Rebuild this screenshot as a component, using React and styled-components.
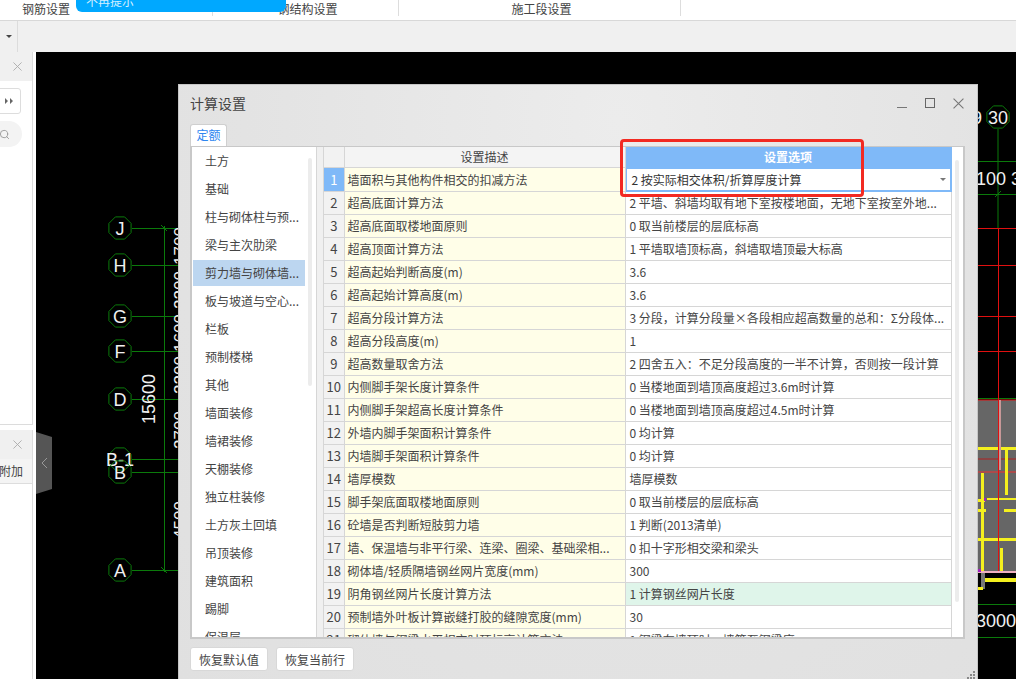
import React from 'react';
import styled, { createGlobalStyle } from 'styled-components';
import { Search } from 'lucide-react';

const GlobalStyle = createGlobalStyle`
  html, body {
    margin: 0;
    height: 100%;
    overflow: hidden;
    background: #fff;
  }
  body {
    font-family: "Noto Sans CJK SC", "Noto Sans", sans-serif;
    font-size: 12px;
    color: #3a3a3a;
  }
`;

const categories = [
  '土方', '基础', '柱与砌体柱与预...', '梁与主次肋梁', '剪力墙与砌体墙...', '板与坡道与空心...',
  '栏板', '预制楼梯', '其他', '墙面装修', '墙裙装修', '天棚装修', '独立柱装修', '土方灰土回填',
  '吊顶装修', '建筑面积', '踢脚', '保温层',
];

const rows = [
  ['墙面积与其他构件相交的扣减方法', '2 按实际相交体积/折算厚度计算'],
  ['超高底面计算方法', '2 平墙、斜墙均取有地下室按楼地面，无地下室按室外地...'],
  ['超高底面取楼地面原则', '0 取当前楼层的层底标高'],
  ['超高顶面计算方法', '1 平墙取墙顶标高，斜墙取墙顶最大标高'],
  ['超高起始判断高度(m)', '3.6'],
  ['超高起始计算高度(m)', '3.6'],
  ['超高分段计算方法', '3 分段，计算分段量×各段相应超高数量的总和：Σ分段体...'],
  ['超高分段高度(m)', '1'],
  ['超高数量取舍方法', '2 四舍五入：不足分段高度的一半不计算，否则按一段计算'],
  ['内侧脚手架长度计算条件', '0 当楼地面到墙顶高度超过3.6m时计算'],
  ['内侧脚手架超高长度计算条件', '0 当楼地面到墙顶高度超过4.5m时计算'],
  ['外墙内脚手架面积计算条件', '0 均计算'],
  ['内墙脚手架面积计算条件', '0 均计算'],
  ['墙厚模数', '墙厚模数'],
  ['脚手架底面取楼地面原则', '0 取当前楼层的层底标高'],
  ['砼墙是否判断短肢剪力墙', '1 判断(2013清单)'],
  ['墙、保温墙与非平行梁、连梁、圈梁、基础梁相...', '0 扣十字形相交梁和梁头'],
  ['砌体墙/轻质隔墙钢丝网片宽度(mm)', '300'],
  ['阴角钢丝网片长度计算方法', '1 计算钢丝网片长度'],
  ['预制墙外叶板计算嵌缝打胶的缝隙宽度(mm)', '30'],
  ['砌体墙与钢梁水平相交时顶标高计算方法', '1 钢梁在墙顶时，墙算至钢梁底'],
];

const axes = [
  ['J', 228], ['H', 265], ['G', 316], ['F', 351], ['D', 399], ['B-1', 459], ['B', 472], ['A', 570],
];

const spans = [['1700', 246], ['2200', 290], ['1600', 333], ['2200', 375], ['2700', 430], ['4500', 520]];

function hexPoints(cx, cy, r) {
  const pts = [];
  for (let i = 0; i < 8; i++) {
    const a = Math.PI / 8 + (i * Math.PI) / 4;
    pts.push(`${(cx + r * Math.cos(a)).toFixed(1)},${(cy + r * Math.sin(a)).toFixed(1)}`);
  }
  return pts.join(' ');
}

function CadDrawing() {
  const green = '#0b7a0b';
  const yellow = '#f4f01e';
  const red = '#e01010';
  return (
    <CadSvg viewBox="36 52 980 627">
      <line x1="164.500" y1="226" x2="164.500" y2="572" stroke={green} />
      {axes.map(([name, y]) => (
        <g key={name}>
          <polygon points={hexPoints(120, y, 12)} fill="none" stroke={green} />
          <line x1="132" y1={y + 0.5} x2="180" y2={y + 0.5} stroke={green} />
          <CadLabel x="120" y={y + 6.5} fontSize="18" textAnchor="middle">{name}</CadLabel>
        </g>
      ))}
      <path d="M161 225l6 6M161 567l6 6" stroke={green} />
      <CadLabel transform="translate(155 399) rotate(-90)" fontSize="18" textAnchor="middle">15600</CadLabel>
      {spans.map(([label, y]) => (
        <CadLabel key={y} transform={`translate(186 ${y}) rotate(-90)`} fontSize="17" textAnchor="middle">{label}</CadLabel>
      ))}

      <polygon points={hexPoints(966, 117, 12)} fill="none" stroke={green} />
      <polygon points={hexPoints(998, 117, 12)} fill="none" stroke={green} />
      <CadLabel x="977" y="124" fontSize="18" textAnchor="middle">9</CadLabel>
      <CadLabel x="998" y="124" fontSize="18" textAnchor="middle">30</CadLabel>
      <line x1="998" y1="129" x2="998" y2="228" stroke={green} />
      <line x1="978" y1="161.500" x2="1016" y2="161.500" stroke={green} />
      <line x1="978" y1="194.500" x2="1016" y2="194.500" stroke={green} />
      <path d="M995 197l6-6" stroke={green} />
      <CadLabel x="976" y="185" fontSize="18">100 3</CadLabel>

      {[228, 265, 316, 351].map(y => (
        <line key={y} x1="978" y1={y + 0.5} x2="1016" y2={y + 0.5} stroke={red} />
      ))}
      <rect x="978" y="400" width="38" height="172" fill="#666" />
      <line x1="978" y1="398.500" x2="1016" y2="398.500" stroke={green} />
      <line x1="978" y1="400" x2="1016" y2="400" stroke={red} />
      <rect x="978" y="447" width="38" height="3" fill={yellow} />
      <line x1="978" y1="459" x2="1016" y2="459" stroke="#b02020" />
      <line x1="978" y1="472" x2="1016" y2="472" stroke="#f03030" />
      <rect x="981" y="473" width="3" height="98" fill={yellow} />
      <rect x="1005" y="450" width="3" height="45" fill={yellow} />
      <rect x="978" y="499" width="7" height="3" fill={yellow} />
      <rect x="987" y="498" width="29" height="2" fill={yellow} />
      <rect x="978" y="509" width="8" height="3" fill={yellow} />
      <rect x="1004" y="509" width="12" height="3" fill={yellow} />
      <rect x="978" y="538" width="38" height="3" fill={yellow} />
      <rect x="1000" y="548" width="3" height="23" fill={yellow} />
      <rect x="998" y="400" width="3" height="70" fill="#c89898" />
      <line x1="998.500" y1="228" x2="998.500" y2="572" stroke={red} />
      <rect x="978" y="571" width="38" height="2" fill="#f0b0c0" />
      <rect x="985" y="578" width="31" height="4" fill={yellow} />
      <rect x="981" y="573" width="4" height="16" fill="#777" />
      <rect x="978" y="587" width="5" height="3" fill={yellow} />
      <rect x="984" y="498" width="2" height="3" fill="#a020c0" />
      <rect x="978" y="569" width="3" height="3" fill="#a020c0" />
      <line x1="978" y1="604.500" x2="1016" y2="604.500" stroke={green} />
      <line x1="978" y1="637.500" x2="1016" y2="637.500" stroke={green} />
      <CadLabel x="976" y="627" fontSize="18">3000</CadLabel>
    </CadSvg>
  );
}

function CloseIcon({ size = 9, color = '#aaa' }) {
  return (
    <svg width={size} height={size} viewBox="0 0 10 10">
      <path d="M0.500 0.500l9 9M9.500 0.500l-9 9" stroke={color} fill="none" />
    </svg>
  );
}

function WindowButtons() {
  return (
    <WindowControls>
      <svg width="10" height="10" viewBox="0 0 10 10"><path d="M0 9.500h10" stroke="#777" fill="none" /></svg>
      <svg width="10" height="10" viewBox="0 0 10 10"><rect x="0.500" y="0.500" width="9" height="9" stroke="#666" fill="none" /></svg>
      <CloseIcon size={11} color="#777" />
    </WindowControls>
  );
}

function SettingsDialog() {
  return (
    <Dialog>
      <TitleBar>
        <DialogTitle>计算设置</DialogTitle>
        <WindowButtons />
      </TitleBar>
      <TabStrip><ActiveTab>定额</ActiveTab></TabStrip>
      <Panel>
        <CategoryList>
          {categories.map((c, i) => (
            <CategoryItem key={c} $selected={i === 4}>{c}</CategoryItem>
          ))}
          <ListThumb />
        </CategoryList>
        <Gutter />
        <TableArea>
          <SettingsTable>
            <colgroup>
              <col style={{ width: 20 }} />
              <col style={{ width: 281 }} />
              <col style={{ width: 326 }} />
            </colgroup>
            <thead>
              <tr>
                <NumHead />
                <DescHead>设置描述</DescHead>
                <ValueHead>设置选项</ValueHead>
              </tr>
            </thead>
            <tbody>
              {rows.map(([desc, value], i) => (
                <tr key={desc}>
                  <NumCell $active={i === 0}>{i + 1}</NumCell>
                  <DescCell>{desc}</DescCell>
                  {i === 0 ? (
                    <EditCell>
                      <EditBox>
                        {value}
                        <Caret />
                      </EditBox>
                    </EditCell>
                  ) : (
                    <ValueCell $changed={i === 18}>{value}</ValueCell>
                  )}
                </tr>
              ))}
            </tbody>
          </SettingsTable>
          <TableThumb />
        </TableArea>
      </Panel>
      <Footer>
        <FooterButton>恢复默认值</FooterButton>
        <FooterButton>恢复当前行</FooterButton>
      </Footer>
      <Highlight />
      <ResizeGrip viewBox="0 0 8 8">
        <path d="M6 0h2v2H6zM3 3h2v2H3zM6 3h2v2H6zM0 6h2v2H0zM3 6h2v2H3zM6 6h2v2H6z" fill="#888" />
      </ResizeGrip>
    </Dialog>
  );
}

export default function App() {
  return (
    <>
      <GlobalStyle />
      <Page>
        <TopTabs>
          <TopTab $width={213} $first>钢筋设置</TopTab>
          <TopTab $width={186}>钢结构设置</TopTab>
          <TopTab $width={282}>施工段设置</TopTab>
          <Toast>不再提示</Toast>
        </TopTabs>
        <Toolbar>
          <ToolbarMenu><DownCaret /></ToolbarMenu>
        </Toolbar>
        <Main>
          <LeftRail>
            <SidePanel $grow>
              <SideHeader><CloseIcon /></SideHeader>
              <StepButton>
                <svg width="8" height="6" viewBox="0 0 8 6"><path d="M0 0l3 3-3 3zM5 0l3 3-3 3z" fill="#666" /></svg>
              </StepButton>
              <SearchPill><Search size={11} color="#999" /></SearchPill>
            </SidePanel>
            <SidePanel $height={249}>
              <SideHeader><CloseIcon /></SideHeader>
              <AttachTab>附加</AttachTab>
            </SidePanel>
          </LeftRail>
          <Canvas>
            <CadDrawing />
            <CollapseHandle>
              <svg width="7" height="12" viewBox="0 0 7 12"><path d="M6 1L1 6l5 5" stroke="#999" fill="none" /></svg>
            </CollapseHandle>
            <SettingsDialog />
          </Canvas>
        </Main>
      </Page>
    </>
  );
}

const Page = styled.div`
  width: 1016px;
  height: 679px;
  display: flex;
  flex-direction: column;
  overflow: hidden;
  background: #fff;
`;

const TopTabs = styled.div`
  position: relative;
  display: flex;
  height: 20px;
  flex: none;
  background: #fff;
  border-bottom: 1px solid #d8d8d8;
  overflow: hidden;
`;

const TopTab = styled.div`
  box-sizing: border-box;
  width: ${p => p.$width}px;
  height: 16px;
  line-height: 18px;
  color: #444;
  border-right: 1px solid #ddd;
  text-align: ${p => (p.$first ? 'left' : 'center')};
  padding-left: ${p => (p.$first ? 22 : 4)}px;
`;

const Toast = styled.div`
  position: absolute;
  left: 76px;
  top: 0;
  width: 210px;
  height: 12px;
  box-sizing: border-box;
  padding-left: 10px;
  line-height: 2px;
  color: #d5f0ff;
  background: #00a8ff;
  border-radius: 0 0 6px 6px;
`;

const Toolbar = styled.div`
  height: 31px;
  flex: none;
  display: flex;
  background: #f0f0f0;
`;

const ToolbarMenu = styled.div`
  width: 18px;
  display: flex;
  align-items: center;
  justify-content: center;
  box-sizing: border-box;
  border-right: 1px solid #dcdcdc;
`;

const DownCaret = styled.span`
  width: 0;
  height: 0;
  border-left: 3px solid transparent;
  border-right: 3px solid transparent;
  border-top: 3px solid #444;
`;

const Main = styled.div`
  flex: 1;
  min-height: 0;
  display: flex;
`;

const LeftRail = styled.div`
  width: 36px;
  flex: none;
  display: flex;
  flex-direction: column;
  gap: 5px;
  box-sizing: border-box;
  padding-right: 3px;
  background: #fff;
`;

const SidePanel = styled.div`
  display: flex;
  flex-direction: column;
  box-sizing: border-box;
  border-right: 1px solid #dcdcdc;
  border-bottom: ${p => (p.$grow ? '1px solid #dcdcdc' : 'none')};
  flex: ${p => (p.$grow ? '1' : 'none')};
  height: ${p => (p.$height ? `${p.$height}px` : 'auto')};
  overflow: hidden;
`;

const SideHeader = styled.div`
  height: 29px;
  flex: none;
  padding-right: 10px;
  display: flex;
  align-items: center;
  justify-content: flex-end;
  background: #f0f0f0;
`;

const StepButton = styled.div`
  align-self: flex-end;
  box-sizing: border-box;
  width: 30px;
  height: 26px;
  margin: 7px 11px 0 0;
  padding-right: 7px;
  display: flex;
  align-items: center;
  justify-content: flex-end;
  border: 1px solid #ddd;
  border-radius: 3px;
  background: #fff;
`;

const SearchPill = styled.div`
  align-self: flex-end;
  box-sizing: border-box;
  width: 30px;
  height: 26px;
  margin: 7px 10px 0 0;
  padding-right: 12px;
  display: flex;
  align-items: center;
  justify-content: flex-end;
  background: #f3f3f3;
  border-radius: 0 13px 13px 0;
`;

const AttachTab = styled.div`
  height: 25px;
  line-height: 24px;
  flex: none;
  box-sizing: border-box;
  padding-right: 9px;
  text-align: right;
  white-space: nowrap;
  direction: rtl;
  color: #444;
  background: #f4f4f4;
  border-bottom: 1px solid #ddd;
`;

const Canvas = styled.div`
  position: relative;
  flex: 1;
  background: #000;
  overflow: hidden;
`;

const CadSvg = styled.svg`
  position: absolute;
  inset: 0;
  width: 100%;
  height: 100%;
`;

const CadLabel = styled.text`
  fill: #f0f0f0;
  font-family: "Liberation Sans", sans-serif;
`;

const CollapseHandle = styled.div`
  position: absolute;
  left: 0;
  top: 380px;
  width: 16px;
  height: 62px;
  display: flex;
  align-items: center;
  justify-content: center;
  background: #555;
  clip-path: polygon(0 0, 100% 8%, 100% 92%, 0 100%);
`;

const Dialog = styled.div`
  position: absolute;
  left: 142px;
  top: 32px;
  width: 800px;
  height: 595px;
  box-sizing: border-box;
  padding: 0 12px 0 11px;
  display: flex;
  flex-direction: column;
  background: radial-gradient(ellipse at 55% 6%, #ececec 0, #e3e3e3 60%, #e0e0e0 100%);
  border: 1px solid #c6c6c6;
  border-bottom: none;
`;

const TitleBar = styled.div`
  height: 39px;
  flex: none;
  display: flex;
  align-items: center;
  justify-content: space-between;
`;

const DialogTitle = styled.div`
  font-size: 14px;
  color: #444;
  margin-top: -4px;
`;

const WindowControls = styled.div`
  display: flex;
  align-items: center;
  gap: 18px;
  margin-top: -3px;
  margin-right: 1px;
`;

const TabStrip = styled.div`
  height: 22px;
  flex: none;
  display: flex;
  align-items: flex-end;
`;

const ActiveTab = styled.div`
  box-sizing: border-box;
  width: 37px;
  height: 22px;
  line-height: 20px;
  text-align: center;
  color: #2e86f0;
  background: #fff;
  border: 1px solid #cfcfcf;
  border-bottom: none;
  border-radius: 3px 3px 0 0;
`;

const Panel = styled.div`
  box-sizing: border-box;
  height: 493px;
  flex: none;
  display: flex;
  background: #fff;
  border: 1px solid #c8c8c8;
  border-width: 1px 2px 2px 2px;
  overflow: hidden;
`;

const CategoryList = styled.div`
  position: relative;
  width: 125px;
  flex: none;
  overflow: hidden;
  border-right: 1px solid #d6d6d6;
  box-sizing: border-box;
`;

const CategoryItem = styled.div`
  box-sizing: border-box;
  height: 26px;
  margin: 1px 12px 2px 1px;
  width: 112px;
  padding-left: 12px;
  line-height: 26px;
  white-space: nowrap;
  color: #444;
  background: ${p => (p.$selected ? '#bcd6f0' : 'transparent')};
`;

const ListThumb = styled.div`
  position: absolute;
  right: 4px;
  top: 11px;
  width: 4px;
  height: 228px;
  background: #ececec;
  border-radius: 2px;
`;

const Gutter = styled.div`
  width: 6px;
  flex: none;
  background: #f0f0f0;
  border-right: 1px solid #d6d6d6;
`;

const TableArea = styled.div`
  position: relative;
  flex: 1;
  min-width: 0;
  overflow: hidden;
`;

const SettingsTable = styled.table`
  width: 627px;
  table-layout: fixed;
  border-collapse: collapse;

  td, th {
    box-sizing: border-box;
    padding: 0;
    height: 23px;
    border-right: 1px solid #d6d6d6;
    border-bottom: 1px solid #d6d6d6;
    font-weight: 400;
    white-space: nowrap;
    overflow: hidden;
  }
  th { height: 20px; }
`;

const NumHead = styled.th`
  background: #f2f2f2;
`;

const DescHead = styled.th`
  background: #f4f4f4;
  color: #444;
`;

const ValueHead = styled.th`
  && {
    background: #7fb9f8;
    color: #fff;
    font-weight: 700;
    border-color: #7fb9f8;
  }
`;

const NumCell = styled.td`
  text-align: center;
  font-size: 13px;
  color: ${p => (p.$active ? '#fff' : '#444')};
  font-weight: ${p => (p.$active ? 700 : 400)};
  background: ${p => (p.$active ? '#7fb9f8' : '#f2f2f2')};
`;

const DescCell = styled.td`
  padding-left: 3px !important;
  background: #fffee8;
  color: #444;
`;

const ValueCell = styled.td`
  padding-left: 4px !important;
  background: ${p => (p.$changed ? '#dff5ea' : '#fff')};
  color: #444;
`;

const EditCell = styled.td`
  && {
    position: relative;
    overflow: visible;
    border-color: #7fb9f8;
  }
`;

const EditBox = styled.div`
  box-sizing: border-box;
  height: 23px;
  line-height: 21px;
  padding-left: 5px;
  color: #333;
  border: 1px solid #7fb9f8;
  display: flex;
  align-items: center;
  justify-content: space-between;
  padding-right: 4px;
`;

const Caret = styled(DownCaret)`
  border-top-color: #777;
`;

const TableThumb = styled.div`
  position: absolute;
  top: 13px;
  right: 4px;
  width: 4px;
  height: 442px;
  background: #ececec;
  border-radius: 2px;
`;

const Footer = styled.div`
  display: flex;
  gap: 8px;
  padding-top: 8px;
`;

const FooterButton = styled.button`
  box-sizing: border-box;
  width: 78px;
  height: 24px;
  padding: 0;
  font: inherit;
  color: #444;
  background: #fff;
  border: 1px solid #d8d8d8;
  border-radius: 3px;
`;

const Highlight = styled.div`
  position: absolute;
  left: 441px;
  top: 54px;
  width: 244px;
  height: 58px;
  box-sizing: border-box;
  border: 3px solid #f22a22;
  border-radius: 4px;
  pointer-events: none;
`;

const ResizeGrip = styled.svg`
  position: absolute;
  right: 2px;
  bottom: 0;
  width: 8px;
  height: 8px;
`;
